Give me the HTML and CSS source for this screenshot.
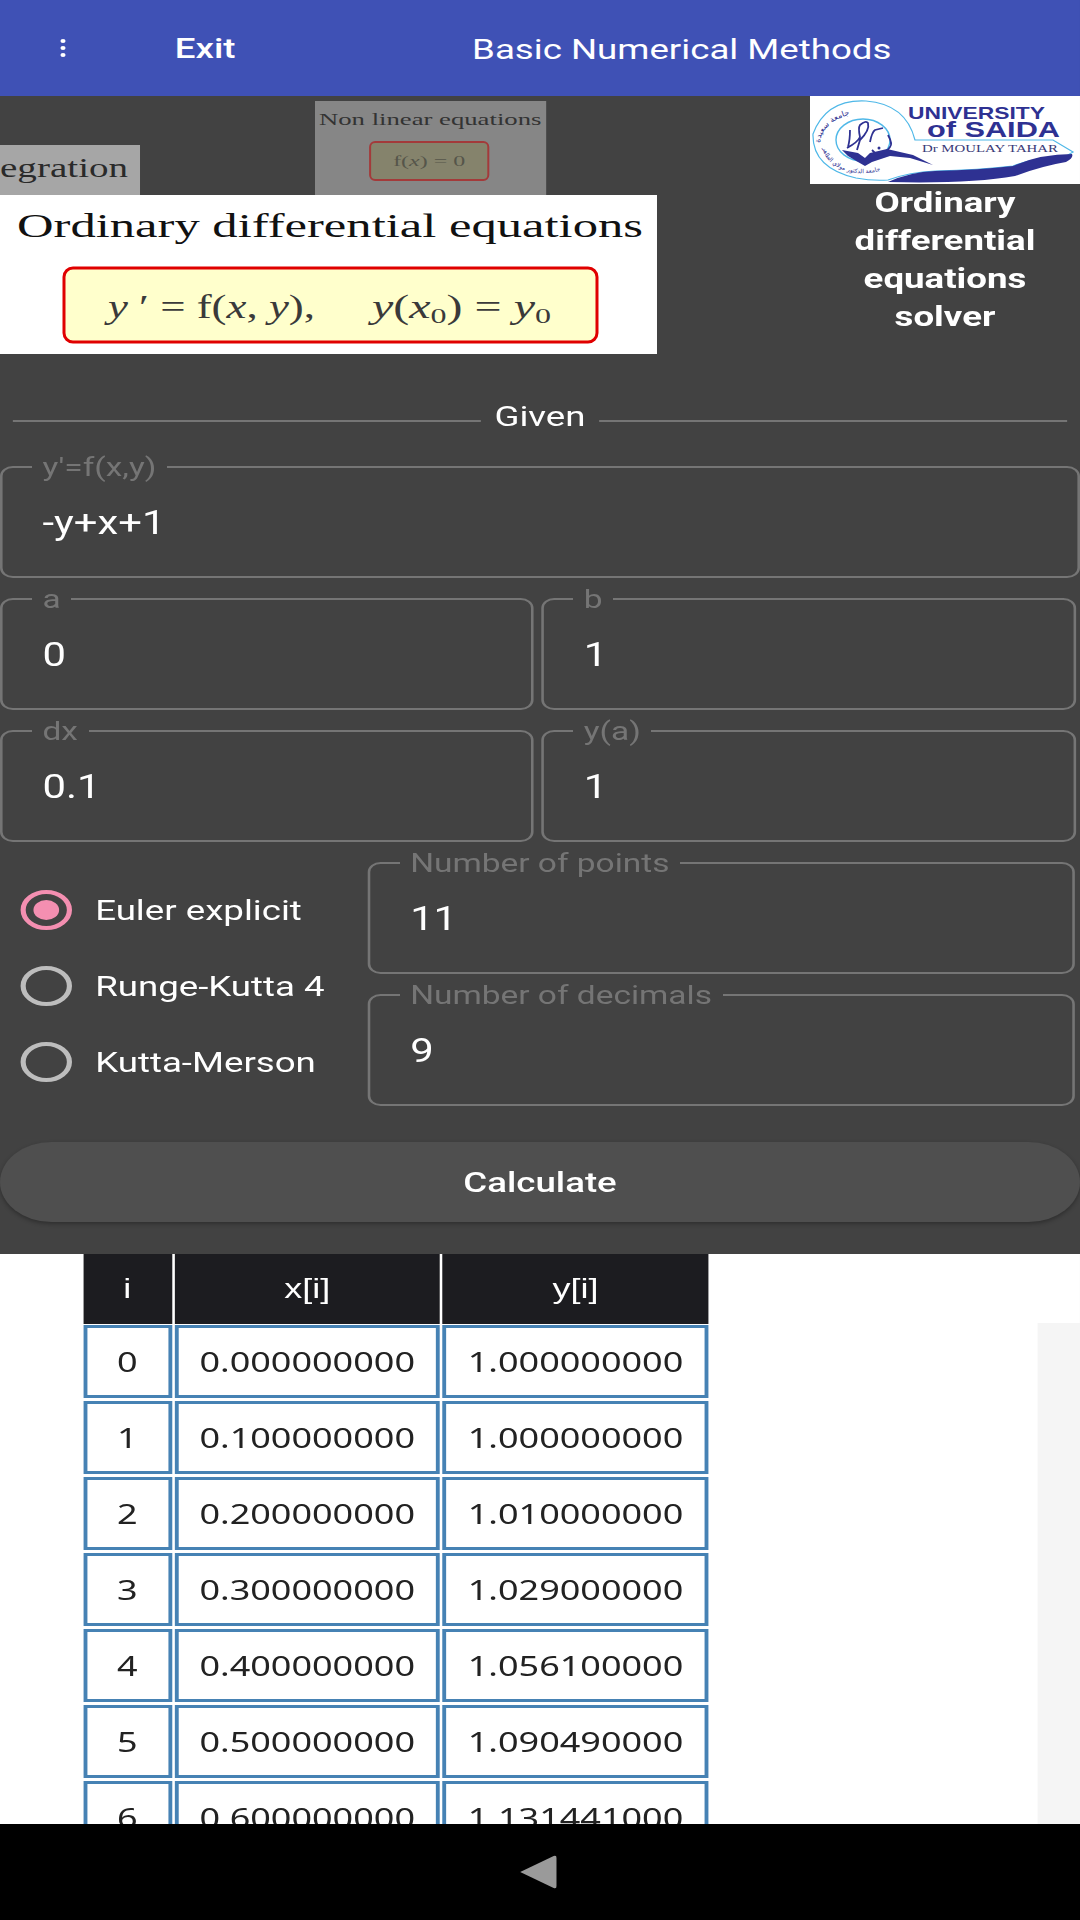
FILE: index.html
```html
<!DOCTYPE html>
<html lang="en">
<head>
    <meta charset="UTF-8">
    <meta name="viewport" content="width=device-width, initial-scale=1.0">
    <title>Basic Numerical Methods</title>
    <link rel="stylesheet" href="styles.css">
</head>
<body>
    <div class="app">
        <header class="appbar">
            <div class="dots"><span></span><span></span><span></span></div>
            <a class="exit">Exit</a>
            <h1 class="app-title">Basic Numerical Methods</h1>
        </header>

        <section class="banners">
            <div class="banner-left">
                <div class="tabs">
                    <svg class="tab-integration" viewBox="0 0 140 50" preserveAspectRatio="none">
                        <rect width="140" height="50" fill="#a6a6a6"/>
                        <text x="0" y="32" font-size="27" fill="#2a2a2a" textLength="128" lengthAdjust="spacingAndGlyphs">egration</text>
                    </svg>
                    <svg class="tab-nonlinear" viewBox="0 0 231 94" preserveAspectRatio="none">
                        <rect width="231" height="94" fill="#868686"/>
                        <text x="4" y="24" font-size="17" fill="#333" textLength="222" lengthAdjust="spacingAndGlyphs">Non linear equations</text>
                        <rect x="55" y="41" width="118" height="38" rx="5" fill="#85836c" stroke="#a33a3a" stroke-width="2"/>
                        <text x="78" y="65" font-size="15" fill="#55554a" textLength="72" lengthAdjust="spacingAndGlyphs">f(<tspan font-style="italic">x</tspan>) = 0</text>
                    </svg>
                </div>
                <svg class="banner-main" viewBox="0 0 657 159" preserveAspectRatio="none">
                    <rect width="657" height="159" fill="#fff"/>
                    <text x="17" y="42" font-size="34" fill="#111" textLength="626" lengthAdjust="spacingAndGlyphs">Ordinary differential equations</text>
                    <rect x="64" y="73" width="533" height="74" rx="9" fill="#ffffcc" stroke="#e00000" stroke-width="3"/>
                    <text x="108" y="123" font-size="33" fill="#3a3a3a" textLength="207" lengthAdjust="spacingAndGlyphs"><tspan font-style="italic">y</tspan> ′ = f(<tspan font-style="italic">x</tspan>, <tspan font-style="italic">y</tspan>),</text>
                    <text x="372" y="123" font-size="33" fill="#3a3a3a" textLength="179" lengthAdjust="spacingAndGlyphs"><tspan font-style="italic">y</tspan>(<tspan font-style="italic">x</tspan><tspan font-size="22" dy="5">0</tspan><tspan dy="-5">) = </tspan><tspan font-style="italic">y</tspan><tspan font-size="22" dy="5">0</tspan></text>
                </svg>
            </div>
            <div class="banner-right">
                <svg class="logo" viewBox="0 0 270 88" preserveAspectRatio="none">
                    <rect width="270" height="88" fill="#fff"/>
                    <defs>
                        <path id="ring" d="M10 47 A42 31 0 0 1 93 42"/>
                        <path id="ring-low" d="M13 52 A40 27 0 0 0 92 56"/>
                    </defs>
                    <path d="M105 44 Q96 8 56 5 Q16 3 3 38 Q2 72 46 82 Q62 85 78 84 Q100 76 125 75 Q170 74 203 70 Q230 60 253 62 L263 56 L243 44 Z" fill="none" stroke="#4fb8e8" stroke-width="1.2"/>
                    <ellipse cx="53" cy="44" rx="27" ry="21" fill="none" stroke="#4fb8e8" stroke-width="1.4"/>
                    <text font-family="DejaVu Sans" font-size="8" fill="#2e3192"><textPath href="#ring">جامعة سعيدة</textPath></text>
                    <text font-family="DejaVu Sans" font-size="6" fill="#2e3192"><textPath href="#ring-low">جامعة الدكتور مولاي الطاهر</textPath></text>
                    <path d="M32 54 L48 57 L55 62 L60 57 L77 53 L103 59 L123 69 L100 62 L80 60 L62 66 L55 70 L48 66 L38 60 Z" fill="#2e3192"/>
                    <path d="M40 34 Q40 44 38 51 M37 52 Q48 46 50 41 Q48 32 50 29 Q56 24 58 27 Q60 34 50 44 L47 54 M60 46 Q62 36 65 34 L73 32 M78 39 Q83 48 80 51 Q74 60 67 59 L62 54" fill="none" stroke="#2e3192" stroke-width="1.8"/>
                    <circle cx="69" cy="52" r="1.5" fill="#2e3192"/>
                    <path d="M78 86 Q100 76 125 75 Q170 74 203 70 Q230 58 262 58 Q264 62 256 66 Q232 70 205 80 Q160 88 78 86Z" fill="#2e3192"/>
                    <text x="98" y="23" font-family="Liberation Sans" font-weight="700" font-size="16.5" fill="#2e3192" textLength="137" lengthAdjust="spacingAndGlyphs">UNIVERSITY</text>
                    <text x="117" y="41" font-family="Liberation Sans" font-weight="700" font-size="22" fill="#2e3192" textLength="133" lengthAdjust="spacingAndGlyphs">of SAIDA</text>
                    <text x="112" y="56" font-size="11" fill="#3a3a78" textLength="136" lengthAdjust="spacingAndGlyphs">Dr MOULAY TAHAR</text>
                </svg>
                <div class="solver-title">Ordinary<br>differential<br>equations<br>solver</div>
            </div>
        </section>

        <main class="form">
            <div class="given"><span class="rule"></span><span class="given-text">Given</span><span class="rule"></span></div>

            <fieldset class="field">
                <legend>y'=f(x,y)</legend>
                <div class="value">-y+x+1</div>
            </fieldset>
            <div class="field-row">
                <fieldset class="field">
                    <legend>a</legend>
                    <div class="value">0</div>
                </fieldset>
                <fieldset class="field">
                    <legend>b</legend>
                    <div class="value">1</div>
                </fieldset>
            </div>
            <div class="field-row">
                <fieldset class="field">
                    <legend>dx</legend>
                    <div class="value">0.1</div>
                </fieldset>
                <fieldset class="field">
                    <legend>y(a)</legend>
                    <div class="value">1</div>
                </fieldset>
            </div>

            <div class="method-row">
                <ul class="radios">
                    <li class="radio checked"><i></i>Euler explicit</li>
                    <li class="radio"><i></i>Runge-Kutta 4</li>
                    <li class="radio"><i></i>Kutta-Merson</li>
                </ul>
                <div class="method-fields">
                    <fieldset class="field">
                        <legend>Number of points</legend>
                        <div class="value">11</div>
                    </fieldset>
                    <fieldset class="field">
                        <legend>Number of decimals</legend>
                        <div class="value">9</div>
                    </fieldset>
                </div>
            </div>

            <button class="calc">Calculate</button>
        </main>

        <section class="results">
            <div class="grid-table">
                <div class="th">i</div><div class="th">x[i]</div><div class="th">y[i]</div>
                <div class="td">0</div><div class="td">0.000000000</div><div class="td">1.000000000</div>
                <div class="td">1</div><div class="td">0.100000000</div><div class="td">1.000000000</div>
                <div class="td">2</div><div class="td">0.200000000</div><div class="td">1.010000000</div>
                <div class="td">3</div><div class="td">0.300000000</div><div class="td">1.029000000</div>
                <div class="td">4</div><div class="td">0.400000000</div><div class="td">1.056100000</div>
                <div class="td">5</div><div class="td">0.500000000</div><div class="td">1.090490000</div>
                <div class="td">6</div><div class="td">0.600000000</div><div class="td">1.131441000</div>
            </div>
            <div class="side-strip"></div>
        </section>

        <nav class="navbar">
            <svg class="back" viewBox="0 0 38 34" preserveAspectRatio="none">
                <path d="M2 17 L35 1 Q38 0 38 3 L38 31 Q38 34 35 33 Z" fill="#9a9a9a"/>
            </svg>
        </nav>
    </div>
</body>
</html>
```

FILE: styles.css
```css
* {
    margin: 0;
    padding: 0;
    box-sizing: border-box;
}

body {
    width: 1080px;
    height: 1920px;
    overflow: hidden;
    background-color: #424242;
}

/* the whole app is drawn 840 wide and pulled out to the 1080 screen */
.app {
    width: 840px;
    height: 1920px;
    transform: scaleX(1.2857);
    transform-origin: left top;
    display: flex;
    flex-direction: column;
    font-family: 'Roboto', sans-serif;
    color: #fff;
}

.appbar {
    display: flex;
    align-items: center;
    height: 96px;
    flex: none;
    background-color: #3f51b5;
    padding-left: 47px;
}

.dots {
    display: flex;
    flex-direction: column;
    gap: 3px;
    width: 4px;
}

.dots span {
    height: 4px;
    background-color: #fff;
    border-radius: 50%;
}

.exit {
    margin-left: 85px;
    font-size: 28.5px;
    font-weight: 500;
}

.app-title {
    margin-left: 184px;
    margin-top: 2px;
    font-size: 28.5px;
    font-weight: 400;
}

.banners {
    display: flex;
    justify-content: space-between;
    height: 258px;
    flex: none;
}

.banners svg {
    display: block;
    font-family: 'Liberation Serif', serif;
}

.banner-left {
    width: 511px;
}

.tabs {
    display: flex;
    align-items: flex-end;
    height: 99px;
}

.tab-integration {
    width: 109px;
    height: 50px;
    margin-right: 136px;
}

.tab-nonlinear {
    width: 180px;
    height: 94px;
}

.banner-main {
    width: 511px;
    height: 159px;
}

.banner-right {
    width: 210px;
}

.logo {
    width: 210px;
    height: 88px;
}

.solver-title {
    text-align: center;
    font-size: 28.5px;
    font-weight: 700;
    line-height: 38px;
}

.form {
    padding-top: 53px;
    flex: none;
}

.given {
    display: flex;
    align-items: center;
    gap: 11px;
    height: 28px;
    padding: 0 10px;
    margin-bottom: 19px;
    font-size: 28.5px;
}

.given-text {
    margin-bottom: 10px;
}

.rule {
    flex: 1;
    height: 2px;
    background-color: #757575;
}

.field {
    display: block;
    width: 100%;
    height: 124px;
    min-width: 0;
    border: 2px solid #757575;
    border-radius: 10px;
    padding: 0 31px;
    margin-bottom: 8px;
}

.field legend {
    padding: 0 8px;
    margin-left: -8px;
    font-size: 26px;
    line-height: 26px;
    color: #757575;
}

.value {
    font-size: 32.5px;
    line-height: 40px;
    padding-top: 23px;
}

.field-row {
    display: flex;
    gap: 6px;
    padding-right: 3px;
}

.field-row .field:first-child {
    flex: none;
    width: 415px;
}

.method-row {
    display: flex;
}

.radios {
    list-style: none;
    width: 286px;
    padding: 22px 0 0 16px;
}

.radio {
    display: flex;
    align-items: center;
    height: 76px;
    gap: 18px;
    font-size: 28.5px;
}

.radio i {
    display: flex;
    align-items: center;
    justify-content: center;
    width: 40px;
    height: 40px;
    border: 4px solid #bdbdbd;
    border-radius: 50%;
}

.radio.checked i {
    border-color: #f48fb1;
}

.radio.checked i::after {
    content: "";
    width: 20px;
    height: 20px;
    border-radius: 50%;
    background-color: #f48fb1;
}

.method-fields {
    width: 550px;
}

.calc {
    display: block;
    width: 100%;
    height: 80px;
    margin-top: 28px;
    margin-bottom: 32px;
    border: none;
    border-radius: 40px;
    background-color: #4f4f4f;
    box-shadow: 0 2px 4px rgba(0, 0, 0, 0.3);
    color: #fff;
    font-family: 'Roboto', sans-serif;
    font-size: 28.5px;
    font-weight: 500;
}

.results {
    display: flex;
    justify-content: space-between;
    height: 570px;
    flex: none;
    overflow: hidden;
    background-color: #fff;
    padding-left: 64.5px;
}

.grid-table {
    display: grid;
    grid-template-columns: 69px 206.5px 206.5px;
    grid-template-rows: 68px;
    grid-auto-rows: 73px;
    gap: 3px 2.2px;
    font-family: 'Noto Sans', sans-serif;
    font-size: 28px;
    color: #222;
}

.th,
.td {
    display: flex;
    align-items: center;
    justify-content: center;
}

.th {
    height: 70px;
    background-color: #1c1c20;
    color: #fff;
    font-family: 'Liberation Sans', sans-serif;
}

.td {
    border: 3px solid #4682b4;
    padding-bottom: 1px;
    background-color: #fff;
}

.side-strip {
    width: 33px;
    margin-top: 69px;
    background-color: #f5f5f5;
}

.navbar {
    display: flex;
    align-items: center;
    height: 96px;
    flex: none;
    background-color: #000;
    padding-left: 403px;
}

.back {
    width: 30px;
    height: 34px;
}
```
